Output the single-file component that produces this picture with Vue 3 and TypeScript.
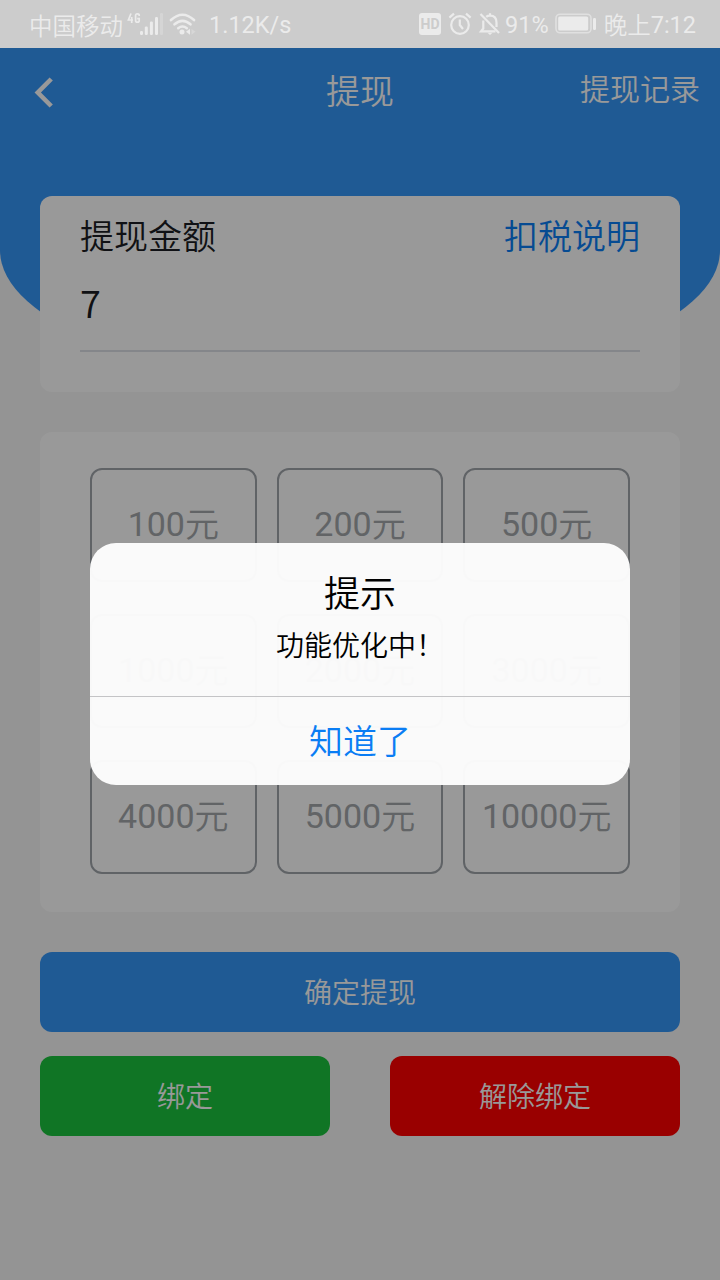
<script setup lang="ts">
import { ref } from 'vue'

const amount = ref<string>('7')
const options: number[] = [100, 200, 500, 1000, 2000, 3000, 4000, 5000, 10000]
const dialogOpen = ref<boolean>(true)
</script>

<template>
  <div class="screen">
    <header class="status">
      <span class="carrier">中国移动</span>
      <svg class="signal" width="36" height="26" viewBox="0 0 36 26">
        <g fill="none" stroke="currentColor" stroke-width="1.7">
          <path d="M4 1.5 1.4 8H6M4.7 5v6" />
          <path d="M12.2 4V3.2Q12.2 1.8 10.4 1.8T8.6 3.6v4.8q0 1.8 1.8 1.8t1.8-1.8V6.6h-2" />
        </g>
        <g fill="currentColor">
          <rect x="13" y="19" width="3" height="4" rx="1.2" />
          <rect x="17.8" y="14.5" width="3" height="8.5" rx="1.2" />
          <rect x="22.9" y="9.5" width="3" height="13.5" rx="1.2" />
          <rect x="28" y="5" width="3" height="18" rx="1.2" />
          <rect x="33" y="1" width="3" height="22" rx="1.2" opacity=".3" />
        </g>
      </svg>
      <svg class="wifi" width="28" height="24" viewBox="0 0 28 24">
        <g fill="none" stroke="currentColor" stroke-width="2.6" stroke-linecap="round">
          <path d="M2 8Q13.5-2.5 25 8" />
          <path d="M5.5 12.3q8-7 16 0" />
          <path d="M9.2 16.2q4.3-3.4 8.6 0" />
        </g>
        <circle cx="13" cy="20" r="2.5" fill="currentColor" />
        <path d="m17 19.8 4-3v6z" fill="currentColor" />
        <path d="m22.5 16.8 4 3-4 3z" fill="currentColor" opacity=".35" />
      </svg>
      <span class="speed">1.12K/s</span>
      <div class="status-right">
        <span class="hd">HD</span>
        <svg class="alarm" width="24" height="24" viewBox="0 0 24 24" fill="none" stroke="currentColor" stroke-width="2.2">
          <circle cx="12" cy="13" r="8.8" />
          <path d="M11.8 7.5V13l3.2 4M1.4 5.6 6 1.6M22.6 5.6 18 1.6" />
        </svg>
        <svg class="mute" width="24" height="24" viewBox="0 0 24 24" fill="none" stroke="currentColor" stroke-width="2.2">
          <path d="M5.3 8.5v8L3 19.4h14.5M8.2 4.8Q9.6 3.6 12 3.6q6.5 0 6.5 7V15M12 4V1.2" />
          <path d="m2.5 2 18.5 19" />
          <path d="M9.5 20.8h5L12 23z" fill="currentColor" stroke="none" />
        </svg>
        <span class="percent">91%</span>
        <svg class="battery" width="42" height="22" viewBox="0 0 42 22">
          <rect x="1" y="1.2" width="35" height="18.6" rx="4" fill="none" stroke="currentColor" stroke-width="1.6" opacity=".65" />
          <rect x="3.2" y="3.4" width="30" height="14.2" rx="1.5" fill="currentColor" />
          <rect x="38" y="5" width="3" height="12" rx="1.2" fill="currentColor" />
        </svg>
        <span><span class="han">晚上</span>7:12</span>
      </div>
    </header>

    <main class="page">
      <div class="hero"></div>
      <div class="content">
        <nav class="nav">
          <svg class="back" width="20" height="32" viewBox="0 0 20 32">
            <path d="M17.2 3 3.8 16.5 17.2 30" fill="none" stroke="#fff" stroke-width="4.6" />
          </svg>
          <h1>提现</h1>
          <a class="history">提现记录</a>
        </nav>

        <section class="card amount">
          <div class="amount-head">
            <span>提现金额</span>
            <a class="link">扣税说明</a>
          </div>
          <div class="value">{{ amount }}</div>
        </section>

        <section class="card choices">
          <div v-for="n in options" :key="n" class="choice">{{ n }}<span class="han">元</span></div>
        </section>

        <button class="btn primary">确定提现</button>
        <div class="pair">
          <button class="btn bind">绑定</button>
          <button class="btn unbind">解除绑定</button>
        </div>
      </div>

      <div v-if="dialogOpen" class="mask">
        <div class="dialog">
          <div class="dialog-body">
            <h2>提示</h2>
            <p>功能优化中！</p>
          </div>
          <button class="dialog-ok" @click="dialogOpen = false">知道了</button>
        </div>
      </div>
    </main>
  </div>
</template>

<style>
body {
  margin: 0;
}
</style>

<style scoped>
.screen {
  width: 720px;
  height: 1280px;
  display: flex;
  flex-direction: column;
  overflow: hidden;
  font-family: Roboto, "Noto Sans CJK SC", sans-serif;
}
h1,
h2,
p {
  margin: 0;
}
button {
  border: 0;
  padding: 0;
  font-family: inherit;
  background: none;
}
h1,
h2,
p,
.history,
.amount,
.btn,
.dialog-ok,
.carrier,
.han {
  font-family: "Noto Sans CJK SC", sans-serif;
  font-weight: 350;
}
.han {
  line-height: 1;
  vertical-align: -1px;
}
.status {
  height: 48px;
  flex: none;
  box-sizing: border-box;
  padding: 2px 24px 0 29px;
  display: flex;
  align-items: center;
  background: #ccc;
  color: #ebebeb;
  font-size: 23.5px;
  line-height: 46px;
  white-space: nowrap;
}
.status svg,
.hd {
  margin-bottom: 2px;
}
.status .carrier {
  width: 94px;
  line-height: 45px;
}
.signal {
  margin: 2px 0 2px 4px;
}
.wifi {
  margin: 0 0 0 6px;
}
.speed {
  margin-left: 12px;
}
.status-right {
  margin-left: auto;
  display: flex;
  align-items: center;
}
.hd {
  width: 22px;
  height: 22px;
  border-radius: 3px;
  background: #ebebeb;
  color: #ccc;
  font-size: 14px;
  font-weight: 700;
  line-height: 22px;
  text-align: center;
}
.alarm {
  margin-left: 7px;
}
.mute {
  margin-left: 6px;
}
.percent {
  margin-left: 3px;
}
.battery {
  margin: 0 7px 0 6px;
}
.page {
  position: relative;
  flex: 1;
  background: #f7f7f7;
}
.hero {
  position: absolute;
  inset: 0 0 auto;
  height: 336px;
  background: #3596f7;
  border-radius: 0 0 50% 50% / 0 0 134px 134px;
}
.content {
  position: relative;
  padding: 0 40px;
}
.nav {
  height: 148px;
  margin: 0 -20px 0 -6px;
  display: grid;
  grid-template-columns: 1fr auto 1fr;
  align-items: start;
  color: #fff;
}
.back {
  margin-top: 28px;
}
.nav h1 {
  margin-right: 14px;
  font-size: 34px;
  line-height: 84px;
}
.history {
  justify-self: end;
  font-size: 30px;
  line-height: 79px;
}
.card {
  box-sizing: border-box;
  border-radius: 12px;
  background: #fff;
}
.amount {
  height: 196px;
  padding: 0 40px;
}
.amount-head {
  display: flex;
  justify-content: space-between;
  height: 80px;
  font-size: 34px;
  line-height: 78px;
  color: #1b1d23;
}
.amount-head .link {
  color: #0a7df4;
}
.value {
  height: 74px;
  border-bottom: 2px solid #dcdfe6;
  font-size: 38px;
  line-height: 51px;
  color: #1b1d23;
}
.choices {
  height: 480px;
  margin-top: 40px;
  padding: 36px 50px;
  display: grid;
  grid-template-columns: repeat(3, 1fr);
  grid-auto-rows: 114px;
  column-gap: 20px;
  row-gap: 32px;
}
.choice {
  box-sizing: border-box;
  border: 2px solid #a0a5ab;
  border-radius: 12px;
  color: #a3a7ab;
  font-size: 34px;
  line-height: 108px;
  text-align: center;
}
.btn {
  width: 100%;
  height: 80px;
  padding-bottom: 2px;
  border-radius: 12px;
  color: #fff;
  font-size: 28px;
  line-height: 78px;
}
.primary {
  display: block;
  margin-top: 40px;
  background: #3596f7;
}
.pair {
  display: flex;
  gap: 60px;
  margin-top: 24px;
}
.bind {
  background: #1cc33f;
}
.unbind {
  background: #f00;
}
.mask {
  position: absolute;
  inset: 0;
  display: flex;
  justify-content: center;
  align-items: center;
  background: rgba(0, 0, 0, 0.4);
}
.dialog {
  width: 540px;
  height: 242px;
  display: flex;
  flex-direction: column;
  border-radius: 26px;
  overflow: hidden;
  background: rgba(252, 252, 252, 0.978);
  text-align: center;
}
.dialog-body {
  height: 153px;
  box-sizing: border-box;
  padding-top: 22px;
  color: #000;
}
.dialog h2 {
  font-size: 36px;
  line-height: 52px;
}
.dialog p {
  font-size: 28px;
  line-height: 54px;
}
.dialog-ok {
  flex: 1;
  padding-bottom: 3px;
  border-top: 1px solid #c4c4c6;
  color: #0a7df4;
  font-size: 34px;
  line-height: 85px;
}
</style>
